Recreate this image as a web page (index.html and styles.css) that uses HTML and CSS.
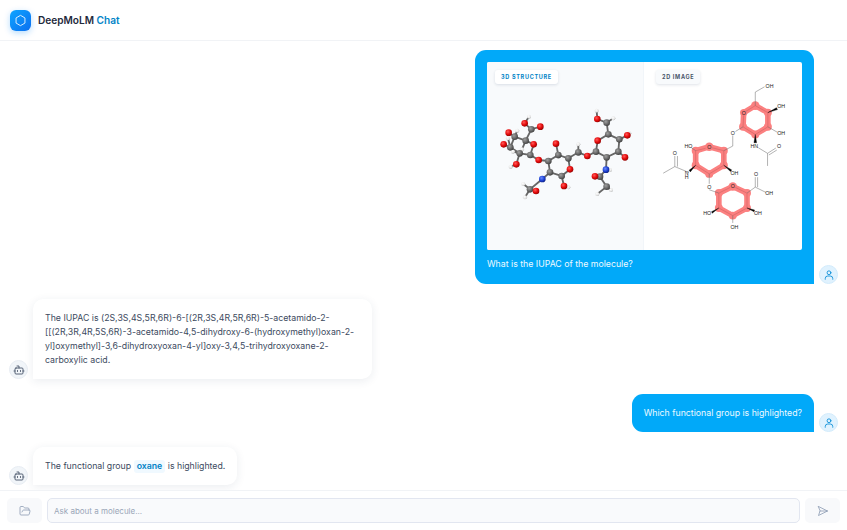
FILE: index.html
```html
<!DOCTYPE html>
<html lang="en">
<head>
<meta charset="utf-8">
<title>DeepMoLM Chat</title>
<link rel="stylesheet" href="styles.css">
</head>
<body>
<div class="app">
  <header class="topbar">
    <div class="logo"><svg viewBox="0 0 24 24" class="logo-icon"><path d="M12 2.5l8.2 4.75v9.5L12 21.5l-8.2-4.75v-9.5z"/></svg></div>
    <h1 class="title">DeepMoLM <span class="title-accent">Chat</span></h1>
  </header>
  <main class="chat">
    <div class="row row-user">
      <div class="bubble bubble-user bubble-image">
        <div class="figure">
          <div class="panel panel-3d">
            <span class="tag tag-blue">3D STRUCTURE</span>
            <svg class="mol" viewBox="487 62 156 188">
              <defs>
                <radialGradient id="gO" cx=".38" cy=".35" r=".7"><stop offset="0" stop-color="#ff5a5a"/><stop offset=".55" stop-color="#e50b0b"/><stop offset="1" stop-color="#8e0303"/></radialGradient>
                <radialGradient id="gC" cx=".38" cy=".35" r=".7"><stop offset="0" stop-color="#a0a0a0"/><stop offset=".6" stop-color="#666"/><stop offset="1" stop-color="#3c3c3c"/></radialGradient>
                <radialGradient id="gN" cx=".38" cy=".35" r=".7"><stop offset="0" stop-color="#6a8cff"/><stop offset=".6" stop-color="#1c3fd0"/><stop offset="1" stop-color="#0c1f80"/></radialGradient>
                <radialGradient id="gH" cx=".4" cy=".35" r=".7"><stop offset="0" stop-color="#ffffff"/><stop offset=".7" stop-color="#e2e2e2"/><stop offset="1" stop-color="#a8a8a8"/></radialGradient>
              </defs>
              <g transform="translate(490 100) scale(.3333)">
                <g class="bonds3d">
                  <path d="M117 50L104 70L124 88L151 80M124 88L107 122L131 133L121 165L89 160L61 142L74 110L107 122M74 110L56 98M61 142L41 133M74 110L82 92M61 142L54 115M89 160L69 155M89 160L79 193L62 200M107 122L96 148M121 165L146 180L175 183L205 165L235 175L240 208L215 228L180 217L175 183M205 165L198 131M235 175L265 157L292 168L318 155L323 122L355 103L388 118L385 155L350 172L318 155M265 157V133M355 103L350 68L322 57L320 32M350 68L370 55M388 118L412 106M385 155L405 172M350 172L348 209L330 230L315 229M348 209L360 210M330 230L350 260L322 282M350 260L363 270M180 217L157 237L120 268L138 273M120 268L100 252M120 268L105 292M215 228L222 258L235 262"/>
                </g>
                <g class="atoms-h">
                  <circle cx="117" cy="50" r="6"/><circle cx="320" cy="32" r="6"/><circle cx="370" cy="55" r="6"/><circle cx="418" cy="100" r="6"/><circle cx="265" cy="133" r="6"/><circle cx="82" cy="92" r="6"/><circle cx="54" cy="115" r="6"/><circle cx="69" cy="155" r="6"/><circle cx="96" cy="148" r="6"/><circle cx="62" cy="200" r="6"/><circle cx="100" cy="252" r="6"/><circle cx="105" cy="292" r="6"/><circle cx="235" cy="262" r="6"/><circle cx="360" cy="210" r="6"/><circle cx="322" cy="282" r="6"/><circle cx="363" cy="270" r="6"/><circle cx="205" cy="170" r="6"/>
                </g>
                <g class="atoms-c">
                  <circle cx="124" cy="88" r="10"/><circle cx="107" cy="122" r="10"/><circle cx="74" cy="110" r="10"/><circle cx="61" cy="142" r="10"/><circle cx="89" cy="160" r="10"/><circle cx="121" cy="165" r="10"/><circle cx="175" cy="183" r="10"/><circle cx="205" cy="165" r="10"/><circle cx="235" cy="175" r="10"/><circle cx="215" cy="228" r="10"/><circle cx="180" cy="217" r="10"/><circle cx="265" cy="157" r="10"/><circle cx="318" cy="155" r="10"/><circle cx="355" cy="103" r="10"/><circle cx="388" cy="118" r="10"/><circle cx="385" cy="155" r="10"/><circle cx="350" cy="172" r="10"/><circle cx="350" cy="68" r="10"/><circle cx="330" cy="230" r="10"/><circle cx="350" cy="260" r="10"/><circle cx="120" cy="268" r="10"/>
                </g>
                <g class="atoms-o">
                  <circle cx="104" cy="70" r="10"/><circle cx="151" cy="80" r="10"/><circle cx="56" cy="98" r="10"/><circle cx="131" cy="133" r="10"/><circle cx="41" cy="133" r="10"/><circle cx="79" cy="193" r="10"/><circle cx="146" cy="180" r="10"/><circle cx="198" cy="131" r="10"/><circle cx="240" cy="208" r="10"/><circle cx="138" cy="273" r="10"/><circle cx="222" cy="258" r="10"/><circle cx="292" cy="168" r="10"/><circle cx="323" cy="122" r="10"/><circle cx="322" cy="57" r="10"/><circle cx="412" cy="106" r="10"/><circle cx="405" cy="172" r="10"/><circle cx="315" cy="229" r="10"/>
                </g>
                <g class="atoms-n">
                  <circle cx="157" cy="237" r="10"/><circle cx="348" cy="209" r="10"/>
                </g>
              </g>
            </svg>
          </div>
          <div class="panel panel-2d">
            <span class="tag tag-slate">2D IMAGE</span>
            <svg class="mol" viewBox="643 62 159 188">
              <g transform="translate(655 80) scale(.3333)">
                <g class="hl">
                  <path d="M265 97L300 76L338 97V140L300 163L263 140Z"/>
                  <path d="M161 200L205 212V256L161 282L120 256V212Z"/>
                  <path d="M232 320L275 340V385L232 408L190 385V340Z"/>
                </g>
                <g class="hl-dots">
                  <circle cx="265" cy="97" r="11"/><circle cx="300" cy="76" r="13"/><circle cx="338" cy="97" r="12"/><circle cx="338" cy="140" r="12"/><circle cx="300" cy="163" r="12"/><circle cx="263" cy="140" r="12"/>
                  <circle cx="161" cy="200" r="13"/><circle cx="205" cy="212" r="12"/><circle cx="205" cy="256" r="12"/><circle cx="161" cy="282" r="12"/><circle cx="120" cy="256" r="12"/><circle cx="120" cy="212" r="12"/>
                  <circle cx="232" cy="320" r="13"/><circle cx="275" cy="340" r="12"/><circle cx="275" cy="385" r="12"/><circle cx="232" cy="408" r="12"/><circle cx="190" cy="385" r="12"/><circle cx="190" cy="340" r="12"/>
                </g>
                <g class="bonds-ring">
                  <path d="M272 93L300 76L338 97V140L300 163L263 140L265 105"/>
                  <path d="M169 203L205 212V256L161 282L120 256V212L150 205"/>
                  <path d="M240 323L275 340V385L232 408L190 385V340L224 323"/>
                </g>
                <g class="bonds2d">
                  <path d="M300 76V35L328 19M338 140L366 156M263 140L240 154M232 166V198L205 212M309 203L337 220L362 204M365 210L341 225M337 220V258"/>
                  <path d="M120 212L107 203M161 282V312M161 330L190 340M100 278L57 260V228M65 260V228M57 260L22 280"/>
                  <path d="M275 340L300 322V292M307 322V292M300 322L332 338M232 408V430"/>
                </g>
                <g class="wedges">
                  <path d="M338 97L364 82L367 88Z"/><path d="M300 163L296 188H304Z"/><path d="M205 256L225 275L229 270Z"/><path d="M120 256L100 271L104 276Z"/><path d="M275 385L296 396L298 391Z"/><path d="M190 385L168 396L170 401Z"/>
                </g>
                <g class="labels">
                  <text x="343" y="22">OH</text><text x="378" y="84">OH</text><text x="378" y="164">OH</text><text x="297" y="204">HN</text><text x="372" y="205">O</text><text x="265" y="103">O</text><text x="232" y="164">O</text>
                  <text x="98" y="205">HO</text><text x="161" y="206">O</text><text x="237" y="286">OH</text><text x="161" y="327">O</text><text x="93" y="285">N</text><text x="93" y="299">H</text><text x="57" y="224">O</text>
                  <text x="232" y="326">O</text><text x="302" y="288">O</text><text x="342" y="346">OH</text><text x="308" y="407">OH</text><text x="237" y="447">OH</text><text x="155" y="407">HO</text>
                </g>
              </g>
            </svg>
          </div>
        </div>
        <p class="bubble-caption">What is the IUPAC of the molecule?</p>
      </div>
      <div class="avatar avatar-user"><svg viewBox="0 0 24 24" class="icon"><circle cx="12" cy="7.5" r="3.8"/><path d="M4.5 20.5v-1.5a5 5 0 0 1 5-5h5a5 5 0 0 1 5 5v1.5"/></svg></div>
    </div>

    <div class="row row-bot">
      <div class="avatar avatar-bot"><svg viewBox="0 0 24 24" class="icon"><path d="M12 8V4H8"/><rect width="16" height="12" x="4" y="8" rx="2"/><path d="M2 14h2"/><path d="M20 14h2"/><path d="M15 13v2"/><path d="M9 13v2"/></svg></div>
      <div class="bubble bubble-bot bubble-wide">The IUPAC is (2S,3S,4S,5R,6R)-6-[(2R,3S,4R,5R,6R)-5-acetamido-2-[[(2R,3R,4R,5S,6R)-3-acetamido-4,5-dihydroxy-6-(hydroxymethyl)oxan-2-yl]oxymethyl]-3,6-dihydroxyoxan-4-yl]oxy-3,4,5-trihydroxyoxane-2-carboxylic acid.</div>
    </div>

    <div class="row row-user">
      <div class="bubble bubble-user">Which functional group is highlighted?</div>
      <div class="avatar avatar-user"><svg viewBox="0 0 24 24" class="icon"><circle cx="12" cy="7.5" r="3.8"/><path d="M4.5 20.5v-1.5a5 5 0 0 1 5-5h5a5 5 0 0 1 5 5v1.5"/></svg></div>
    </div>

    <div class="row row-bot">
      <div class="avatar avatar-bot"><svg viewBox="0 0 24 24" class="icon"><path d="M12 8V4H8"/><rect width="16" height="12" x="4" y="8" rx="2"/><path d="M2 14h2"/><path d="M20 14h2"/><path d="M15 13v2"/><path d="M9 13v2"/></svg></div>
      <div class="bubble bubble-bot">The functional group <span class="chip">oxane</span> is highlighted.</div>
    </div>
  </main>
  <footer class="composer">
    <button class="btn" type="button" aria-label="Open file"><svg viewBox="0 0 24 24" class="icon icon-btn"><path d="m6 14 1.5-2.9A2 2 0 0 1 9.24 10H20a2 2 0 0 1 1.94 2.5l-1.54 6a2 2 0 0 1-1.95 1.5H4a2 2 0 0 1-2-2V5a2 2 0 0 1 2-2h3.9a2 2 0 0 1 1.69.9l.81 1.2a2 2 0 0 0 1.69.9H18a2 2 0 0 1 2 2v2"/></svg></button>
    <input class="input" type="text" placeholder="Ask about a molecule...">
    <button class="btn" type="button" aria-label="Send"><svg viewBox="0 0 24 24" class="icon icon-btn"><path d="M3 3l18 9-18 9 3-9z"/><path d="M6 12h15"/></svg></button>
  </footer>
</div>
</body>
</html>
```
FILE: styles.css
```css
* { box-sizing: border-box; }
html, body { margin: 0; height: 100%; }
body {
  font-family: Inter, "Liberation Sans", sans-serif;
  font-size: 8.75px;
  line-height: 14px;
  color: #334155;
  background: #fff;
  overflow: hidden;
}
.app { display: flex; flex-direction: column; height: 530px; }

.topbar {
  height: 41px;
  flex: none;
  display: flex;
  align-items: center;
  gap: 7px;
  padding: 0 10px;
  border-bottom: 1px solid #f1f3f6;
}
.logo {
  width: 21px;
  height: 21px;
  border-radius: 6px;
  background: linear-gradient(135deg, #0ea5ff, #0b6ff0);
  box-shadow: 0 2px 6px rgba(14, 140, 250, .3);
  display: flex;
  align-items: center;
  justify-content: center;
}
.logo-icon { width: 13px; height: 13px; fill: none; stroke: #e6f4ff; stroke-width: 1.7; }
.title { margin: 0; font-size: 10.1px; line-height: 14px; font-weight: 600; color: #1e293b; }
.title-accent { color: #0284c7; }

.chat {
  flex: 1;
  min-height: 0;
  overflow: hidden;
  display: flex;
  flex-direction: column;
  gap: 15px;
  padding: 9px 9px 0;
}
.row { display: flex; align-items: flex-end; gap: 5px; flex: none; }
.row-user { justify-content: flex-end; }

.avatar {
  width: 19px;
  height: 19px;
  flex: none;
  border-radius: 50%;
  display: flex;
  align-items: center;
  justify-content: center;
}
.avatar-user { background: #e0f2fe; border: 1px solid #d3ecfc; }
.avatar-bot { background: #f1f5f9; border: 1px solid #e8edf3; }
.avatar-user .icon { stroke: #0c8fd8; }
.avatar-bot .icon { stroke: #475569; }

.icon { width: 12px; height: 12px; fill: none; stroke-width: 1.8; stroke-linecap: round; stroke-linejoin: round; }
.icon-btn { stroke: #8a9ab2; stroke-width: 1.6; }

.bubble { padding: 12px; }
.bubble-user {
  background: #01a9f9;
  color: #eef9ff;
  border-radius: 11px 11px 0 11px;
}
.bubble-image { width: 339px; padding-bottom: 13px; }
.bubble-bot {
  background: #fff;
  color: #3c4a5e;
  border-radius: 10px 10px 10px 0;
  box-shadow: 0 2px 10px rgba(30, 50, 90, .09);
}
.bubble-wide { width: 339px; padding: 11.5px 12px; line-height: 14.3px; }
.bubble-caption { margin: 7px 0 0; }

.figure {
  display: flex;
  height: 188px;
  border-radius: 2px;
  overflow: hidden;
  background: #fff;
}
.panel { position: relative; flex: 1; }
.panel-3d { flex: 0 0 156px; background: #f8fafc; border-right: 1px solid #f1f5f9; }
.mol { display: block; width: 100%; height: 100%; }
.panel-3d .mol { width: 156px; }

.tag {
  position: absolute;
  top: 8px;
  left: 8px;
  padding: 2px 6px;
  background: #fff;
  border-radius: 3px;
  box-shadow: 0 1px 3px rgba(30, 50, 90, .14);
  font-size: 5.5px;
  line-height: 10px;
  font-weight: 700;
  letter-spacing: .7px;
  white-space: nowrap;
}
.panel-2d .tag { left: 12px; background: #f8fafc; }
.tag-blue { color: #0284c7; }
.tag-slate { color: #475569; }

.bonds3d path { fill: none; stroke: #666; stroke-width: 5.5; stroke-linecap: round; }
.atoms-o circle { fill: url(#gO); }
.atoms-c circle { fill: url(#gC); }
.atoms-n circle { fill: url(#gN); }
.atoms-h circle { fill: url(#gH); }

.hl path { fill: none; stroke: #fb8080; stroke-width: 17; stroke-linejoin: round; }
.hl-dots circle { fill: #fb8080; }
.bonds-ring path { fill: none; stroke: #c25a5a; stroke-width: 1.4; }
.bonds2d path { fill: none; stroke: #666; stroke-width: 1.5; }
.wedges path { fill: #000; stroke: #000; stroke-width: 1; }
.labels text {
  font-family: "Liberation Sans", sans-serif;
  font-size: 16px;
  fill: #222;
  text-anchor: middle;
}

.chip {
  display: inline-block;
  padding: 0 3px;
  line-height: 13px;
  border-radius: 3px;
  background: #f0f9ff;
  color: #0284c7;
  font-weight: 600;
}

.composer {
  height: 40px;
  flex: none;
  display: flex;
  align-items: flex-start;
  gap: 5px;
  padding: 7px 7px 0;
  border-top: 1px solid #f1f3f6;
}
.btn {
  width: 35px;
  height: 25px;
  flex: none;
  padding: 0;
  border: 0;
  border-radius: 5px;
  background: #f8f9fb;
  display: flex;
  align-items: center;
  justify-content: center;
}
.input {
  flex: 1;
  min-width: 0;
  height: 25px;
  padding: 0 6px;
  border: 1px solid #e2e6f0;
  border-radius: 5px;
  background: #f9fafc;
  font: 8px Inter, "Liberation Sans", sans-serif;
  color: #334155;
}
.input::placeholder { color: #9aa6b8; opacity: 1; }
```
